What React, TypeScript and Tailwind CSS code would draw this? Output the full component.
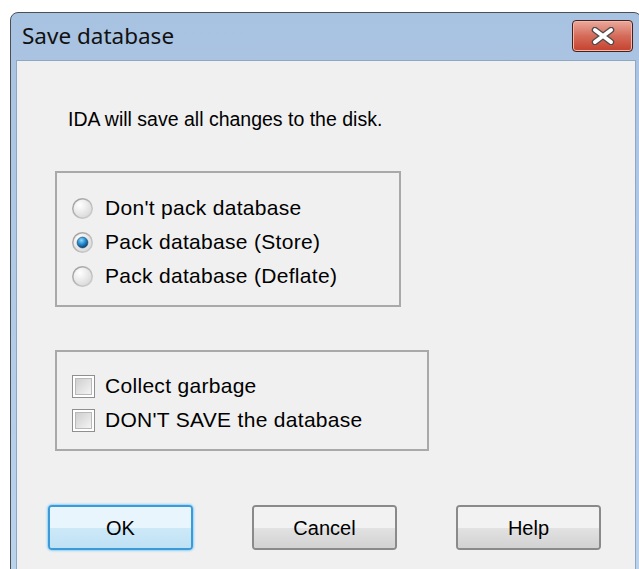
import React from "react";

const uiFont = { fontFamily: '"Liberation Sans", Arial, sans-serif' };

function Radio({ checked }: { checked?: boolean }) {
  return (
    <svg width="23" height="23" viewBox="0 0 22 22" className="shrink-0">
      <defs>
        <linearGradient id="radioRing" x1="0" y1="0" x2="1" y2="1">
          <stop offset="0" stopColor="#9a9a9a" />
          <stop offset="1" stopColor="#d4d4d4" />
        </linearGradient>
        <radialGradient id="radioFace" cx="0.35" cy="0.3" r="0.8">
          <stop offset="0" stopColor="#ffffff" />
          <stop offset="1" stopColor="#d8d8d8" />
        </radialGradient>
        <radialGradient id="radioDot" cx="0.4" cy="0.3" r="0.7">
          <stop offset="0" stopColor="#8fd8ff" />
          <stop offset="0.5" stopColor="#2a8fd0" />
          <stop offset="1" stopColor="#0a3f6e" />
        </radialGradient>
      </defs>
      <circle cx="11" cy="11" r="10" fill="url(#radioRing)" />
      <circle cx="11" cy="11" r="8.6" fill="url(#radioFace)" />
      {checked && <circle cx="11" cy="11" r="5.2" fill="url(#radioDot)" stroke="#1c4a72" strokeWidth="0.6" />}
    </svg>
  );
}

function Checkbox() {
  return (
    <div className="w-[23px] h-[23px] shrink-0 border border-[#8e8f8f] bg-white p-[2px]">
      <div className="w-full h-full border border-[#b9b9b9] bg-gradient-to-br from-[#cfcfcf] to-[#f4f4f4]" />
    </div>
  );
}

function DialogButton({ label, primary }: { label: string; primary?: boolean }) {
  return (
    <button
      className={`w-[145px] h-[45px] rounded-[4px] border-2 text-[20px] text-black relative overflow-hidden ${
        primary
          ? "border-[#3c9ad8] shadow-[0_0_2px_1px_#8fd3f6]"
          : "border-[#8a8a8a]"
      }`}
      style={uiFont}
    >
      <div className="absolute inset-0 flex flex-col">
        <div className={`flex-1 ${primary ? "bg-[#e8f5fc]" : "bg-[#f2f2f2]"}`} />
        <div className={`flex-1 ${primary ? "bg-gradient-to-b from-[#cde9f8] to-[#bfe1f4]" : "bg-gradient-to-b from-[#e2e2e2] to-[#d2d2d2]"}`} />
      </div>
      <span className="relative">{label}</span>
    </button>
  );
}

export default function App() {
  return (
    <div className="w-[639px] h-[569px] bg-white overflow-hidden">
      <div className="ml-[10px] mt-[12px] w-[632px] h-[570px] rounded-t-[8px] border border-[#4a4f56] bg-gradient-to-b from-[#a8c2e1] to-[#bcd3ec] flex flex-col pl-[5px] pr-[5px]">
        {/* caption */}
        <div className="h-[47px] flex items-center justify-between pr-[3px]">
          <span className="pl-[6px] pb-[2px] text-[22.5px] text-[#111]" style={{ fontFamily: '"Noto Sans", "Open Sans", sans-serif' }}>
            Save database
          </span>
          <button className="w-[61px] h-[32px] -mt-[2px] rounded-[4px] border border-[#4b1e1a] bg-gradient-to-b from-[#e9a99c] via-[#d56b5a] to-[#c4412c] flex items-center justify-center shadow-[inset_0_0_0_1px_#f1b9ae]">
            <svg width="26" height="18" viewBox="0 0 26 18">
              <path d="M5 3 L21 15 M21 3 L5 15" stroke="#4b4b4b" strokeWidth="6.5" strokeLinecap="round" />
              <path d="M5 3 L21 15 M21 3 L5 15" stroke="#ffffff" strokeWidth="4" strokeLinecap="round" />
            </svg>
          </button>
        </div>

        {/* body */}
        <div className="flex-1 bg-[#f0f0f0] border-l border-t border-r border-[#8ea7c4] text-black" style={uiFont}>
          <p className="mt-[46px] ml-[51px] leading-[24px] text-[19.5px]">IDA will save all changes to the disk.</p>

          <div className="mt-[40px] ml-[38px] w-[346px] h-[136px] border-2 border-[#a9a9a9] pt-[18px] pl-[14px] text-[21px] tracking-[0.3px]">
            {[
              { label: "Don't pack database" },
              { label: "Pack database (Store)", checked: true },
              { label: "Pack database (Deflate)" },
            ].map((r) => (
              <div key={r.label} className="h-[34px] flex items-center gap-[11px]">
                <Radio checked={r.checked} />
                <span>{r.label}</span>
              </div>
            ))}
          </div>

          <div className="mt-[43px] ml-[38px] w-[374px] h-[101px] border-2 border-[#a9a9a9] pt-[17px] pl-[15px] text-[21px] tracking-[0.3px]">
            {["Collect garbage", "DON'T SAVE the database"].map((label) => (
              <div key={label} className="h-[34px] flex items-center gap-[10px]">
                <Checkbox />
                <span>{label}</span>
              </div>
            ))}
          </div>

          <div className="mt-[54px] ml-[31px] flex gap-[59px]">
            <DialogButton label="OK" primary />
            <DialogButton label="Cancel" />
            <DialogButton label="Help" />
          </div>
        </div>
      </div>
    </div>
  );
}
